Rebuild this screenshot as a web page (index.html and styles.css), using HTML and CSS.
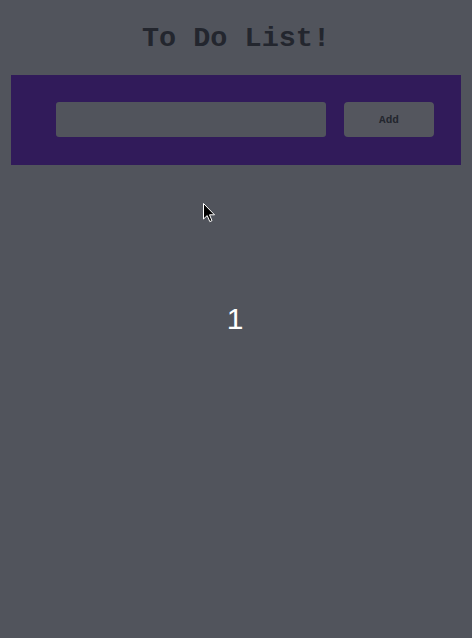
FILE: index.html
```html
<!DOCTYPE html>
<html>
<head>
<meta charset="utf-8">
<link rel="stylesheet" href="styles.css">
</head>
<body>
<h1 class="title">To Do List!</h1>
<div class="bar">
  <input class="task-input" type="text">
  <button class="add-btn">Add</button>
</div>
<div class="list">
  <div class="count">1</div>
</div>
<svg class="cursor" width="13" height="20" viewBox="0 0 13 20"><path d="M0.5 0.5 L0.5 16 L4.2 12.6 L6.8 18.6 L9 17.6 L6.5 11.8 L11.5 11.8 Z" fill="#000" stroke="#fff" stroke-width="1"/></svg>
</body>
</html>
```
FILE: styles.css
```css
html, body {
  margin: 0;
  padding: 0;
  background: #51545c;
  height: 100%;
}
body {
  position: relative;
  font-family: "Liberation Sans", Arial, sans-serif;
}
.title {
  margin: 0;
  padding-top: 23px;
  height: 53px;
  box-sizing: border-box;
  text-align: center;
  font-family: "Liberation Mono", "Courier New", monospace;
  font-weight: bold;
  font-size: 28.5px;
  line-height: 32px;
  color: #23262e;
}
.bar {
  margin: 22px 11px 0;
  height: 90px;
  box-sizing: border-box;
  background: #311b5a;
  display: flex;
  align-items: flex-start;
  padding: 27px 27px 0 45px;
  gap: 18px;
}
.task-input {
  width: 270px;
  height: 35px;
  box-sizing: border-box;
  border: none;
  border-radius: 3px;
  background: #51545c;
  outline: none;
  padding: 0 8px;
}
.add-btn {
  width: 90px;
  height: 35px;
  border: none;
  border-radius: 4px;
  background: #54565e;
  font-family: "Liberation Mono", "Courier New", monospace;
  font-weight: bold;
  font-size: 11px;
  color: #23262e;
  padding: 0;
}
.list {
  display: flex;
  justify-content: center;
  padding-top: 137px;
}
.count {
  font-size: 30px;
  line-height: 34px;
  color: #ffffff;
  margin-left: -2px;
}
.cursor {
  position: absolute;
  left: 203px;
  top: 203px;
}
```
